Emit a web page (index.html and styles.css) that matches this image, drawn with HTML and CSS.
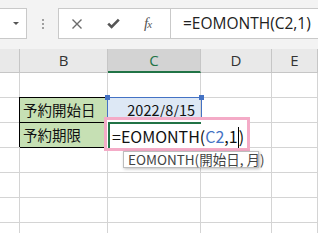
FILE: index.html
```html
<!DOCTYPE html>
<html>
<head>
<meta charset="utf-8">
<link rel="stylesheet" href="styles.css">
</head>
<body>

<div class="formulabar">
  <div class="namebox"><span class="caret-down"></span></div>
  <div class="grip"><i></i><i></i><i></i></div>
  <div class="inputbox">
    <div class="tools">
      <svg class="ico" width="12" height="12" viewBox="0 0 12 12"><path d="M1.5 1.5 L10.5 10.5 M10.5 1.5 L1.5 10.5" stroke="#6b6b6b" stroke-width="1.4" fill="none"/></svg>
      <svg class="ico" width="13" height="11" viewBox="0 0 13 11"><path d="M1.2 5.6 L4.6 9 L11.8 1.6" stroke="#555" stroke-width="2.6" fill="none"/></svg>
      <span class="fx">f<small>x</small></span>
    </div>
    <div class="formula">=EOMONTH(C2,1)</div>
  </div>
</div>

<div class="sheet">
  <div class="grid">
    <div class="hd"></div><div class="hd">B</div><div class="hd sel">C</div><div class="hd">D</div><div class="hd">E</div>

    <div class="c"></div><div class="c"></div><div class="c"></div><div class="c"></div><div class="c"></div>
    <div class="c"></div><div class="c label">予約開始日</div><div class="c date">2022/8/15</div><div class="c"></div><div class="c"></div>
    <div class="c"></div><div class="c label">予約期限</div><div class="c"></div><div class="c"></div><div class="c"></div>
    <div class="c"></div><div class="c"></div><div class="c"></div><div class="c"></div><div class="c"></div>
    <div class="c"></div><div class="c"></div><div class="c"></div><div class="c"></div><div class="c"></div>
    <div class="c"></div><div class="c"></div><div class="c"></div><div class="c"></div><div class="c"></div>
    <div class="c"></div><div class="c"></div><div class="c"></div><div class="c"></div><div class="c"></div>
  </div>

  <!-- range reference for C2 -->
  <div class="refbox">
    <span class="h tl"></span><span class="h tr"></span><span class="h bl"></span><span class="h br"></span>
  </div>

  <!-- in-cell editor on C3 -->
  <div class="editor">
    <div class="active"></div>
    <div class="edittext">=EOMONTH(<span class="ref">C2</span>,1<span class="cursor"></span>)</div>
  </div>

  <div class="tip">EOMONTH(開始日, 月)</div>
</div>

</body>
</html>
```

FILE: styles.css
```css
body {
  margin: 0;
  width: 318px;
  height: 233px;
  overflow: hidden;
  background: #fff;
  font-family: "Noto Sans CJK JP", sans-serif;
}
* {
  box-sizing: border-box;
}

/* formula bar */
.formulabar {
  display: flex;
  align-items: flex-start;
  height: 49px;
  padding-top: 8px;
  background: #f3f3f3;
}
.namebox {
  position: relative;
  width: 27px;
  height: 31px;
  background: #fff;
  border: 1px solid #c9c9c9;
  border-left: none;
}
.caret-down {
  position: absolute;
  left: 13px;
  top: 13px;
  border-left: 3px solid transparent;
  border-right: 3px solid transparent;
  border-top: 3px solid #555;
}
.grip {
  width: 31px;
  height: 31px;
  display: flex;
  flex-direction: column;
  align-items: center;
  justify-content: center;
  gap: 2px;
}
.grip i {
  display: block;
  width: 2px;
  height: 2px;
  background: #a0a0a0;
}
.inputbox {
  flex: 1;
  display: flex;
  height: 31px;
  background: #fff;
  border: 1px solid #c9c9c9;
  border-right: none;
}
.tools {
  width: 112px;
  display: flex;
  align-items: center;
  padding-left: 12px;
  gap: 24px;
  border-right: 1px solid #c9c9c9;
}
.fx {
  font-family: "Liberation Serif", serif;
  font-style: italic;
  font-size: 15px;
  color: #555;
  letter-spacing: -1px;
}
.fx small {
  font-size: 11px;
}
.formula {
  padding-left: 12px;
  line-height: 29px;
  font-family: "Open Sans", sans-serif;
  font-size: 15.5px;
  color: #222;
}

/* sheet */
.sheet {
  position: relative;
}
.grid {
  display: grid;
  grid-template-columns: 20px 88px 93px 71px 46px;
  grid-template-rows: 24px repeat(6, 25px) 10px;
}
.hd {
  background: #e9e9e9;
  border-right: 1px solid #c6c6c6;
  border-bottom: 1px solid #c6c6c6;
  text-align: center;
  line-height: 23px;
  font-family: "Open Sans", sans-serif;
  font-size: 15px;
  color: #333;
}
.hd.sel {
  background: #d3d3d3;
  color: #217346;
  border-bottom: 2px solid #217346;
}
.c {
  border-right: 1px solid #d4d4d4;
  border-bottom: 1px solid #d4d4d4;
  font-size: 14.5px;
  line-height: 24px;
  color: #111;
  white-space: nowrap;
}
.c:nth-last-child(-n+5) {
  border-bottom: none;
}
.label {
  background: #c6e0b4;
  border-color: #000;
  box-shadow: -1px -1px 0 #000;
  padding-left: 3px;
}
.date {
  background: #dde8f5;
  text-align: right;
  padding-right: 5px;
}

/* reference highlight */
.refbox {
  position: absolute;
  left: 107px;
  top: 48px;
  width: 95px;
  height: 26px;
  border: 1px solid #4472c4;
}
.h {
  position: absolute;
  width: 5px;
  height: 5px;
  background: #4472c4;
}
.tl { left: -3px; top: -3px; }
.tr { right: -3px; top: -3px; }
.bl { left: -3px; bottom: -3px; }
.br { right: -3px; bottom: -3px; }

/* editor */
.editor {
  position: absolute;
  left: 104px;
  top: 68px;
  width: 146px;
  height: 34px;
  border: 3px solid #f4abc7;
  background: #fff;
}
.active {
  position: absolute;
  left: 1px;
  top: 2px;
  width: 93px;
  height: 26px;
  border-top: 2px solid #217346;
  border-left: 2px solid #217346;
}
.edittext {
  position: absolute;
  left: 5px;
  top: 4px;
  font-size: 16px;
  line-height: 24px;
  color: #111;
  white-space: nowrap;
}
.ref {
  color: #4472c4;
}
.cursor {
  display: inline-block;
  width: 0;
  height: 21px;
  border-left: 1px solid #000;
  vertical-align: -5px;
}

/* tooltip */
.tip {
  position: absolute;
  left: 123px;
  top: 102px;
  width: 136px;
  height: 17px;
  background: #fff;
  border: 1px solid #bdbdbd;
  box-shadow: 1px 1px 3px rgba(0,0,0,0.25);
  padding-left: 4px;
  font-size: 13.5px;
  line-height: 15px;
  color: #444;
  white-space: nowrap;
}
```
